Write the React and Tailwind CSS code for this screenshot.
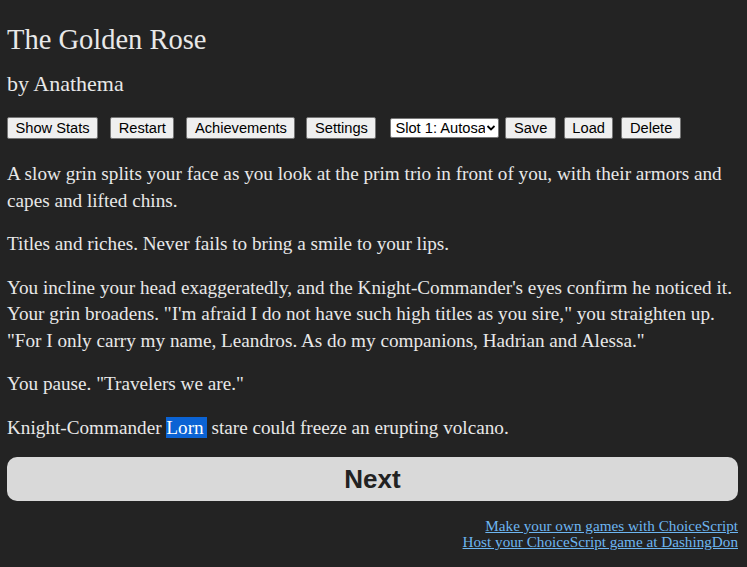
export default function App() {
  const btn =
    "h-[22px] px-[7.5px] bg-[#efefef] border border-[#767676] rounded-[2px] text-black text-[14.67px] leading-none [font-family:'Liberation_Sans',Arial,sans-serif]";
  return (
    <div className="min-h-[567px] bg-[#232323] text-[#e8e8e8] [font-family:'Liberation_Serif',Georgia,serif]">
      <div className="pl-[7px] pr-[9px] pt-[22px] pb-[10px]">
        <h1 className="text-[28.5px] leading-[36px] font-normal">The Golden Rose</h1>
        <h2 className="mt-[13px] text-[22px] leading-[26px] font-normal">by Anathema</h2>
        <div className="mt-[20px] flex items-center">
          <button className={btn}>Show Stats</button>
          <button className={btn + " ml-[12px]"}>Restart</button>
          <button className={btn + " ml-[12px]"}>Achievements</button>
          <button className={btn + " ml-[11px]"}>Settings</button>
          <div className="ml-[14px] h-[20px] w-[109px] bg-white border border-[#767676] rounded-[2px] flex items-center text-black text-[14.67px] [font-family:'Liberation_Sans',Arial,sans-serif] overflow-hidden pl-[4px] pr-[2px]">
            <span className="flex-1 whitespace-nowrap overflow-hidden">Slot 1: Autosave</span>
            <svg width="10" height="10" viewBox="0 0 10 10" className="shrink-0 ml-[1px]">
              <path d="M1.5 3 L5 6.5 L8.5 3" stroke="black" strokeWidth="1.8" fill="none" />
            </svg>
          </div>
          <button className={btn + " ml-[6px]"}>Save</button>
          <button className={btn + " ml-[8px]"}>Load</button>
          <button className={btn + " ml-[8px]"}>Delete</button>
        </div>
        <div className="mt-[22px] text-[19.2px] leading-[26.5px]">
          <p>
            A slow grin splits your face as you look at the prim trio in front of you, with their armors and capes and lifted chins.
          </p>
          <p className="mt-[17px]">Titles and riches. Never fails to bring a smile to your lips.</p>
          <p className="mt-[17px]">
            You incline your head exaggeratedly, and the Knight-Commander's eyes confirm he noticed it. Your grin broadens. "I'm afraid I do not have such high titles as you sire," you straighten up. "For I only carry my name, Leandros. As do my companions, Hadrian and Alessa."
          </p>
          <p className="mt-[17px]">You pause. "Travelers we are."</p>
          <p className="mt-[17px]">
            Knight-Commander <span className="bg-[#0b63d4] text-white pr-[3px]">Lorn</span> stare could freeze an erupting volcano.
          </p>
        </div>
        <button className="mt-[16px] w-full h-[44px] rounded-[10px] bg-[#d9d9d9] text-[#222] text-[26px] font-bold [font-family:'Liberation_Sans',Arial,sans-serif]">
          Next
        </button>
        <div className="mt-[17px] text-right text-[15.2px] leading-[16px]">
          <div>
            <a className="text-[#6db6f1] underline">Make your own games with ChoiceScript</a>
          </div>
          <div>
            <a className="text-[#6db6f1] underline">Host your ChoiceScript game at DashingDon</a>
          </div>
        </div>
      </div>
    </div>
  );
}
